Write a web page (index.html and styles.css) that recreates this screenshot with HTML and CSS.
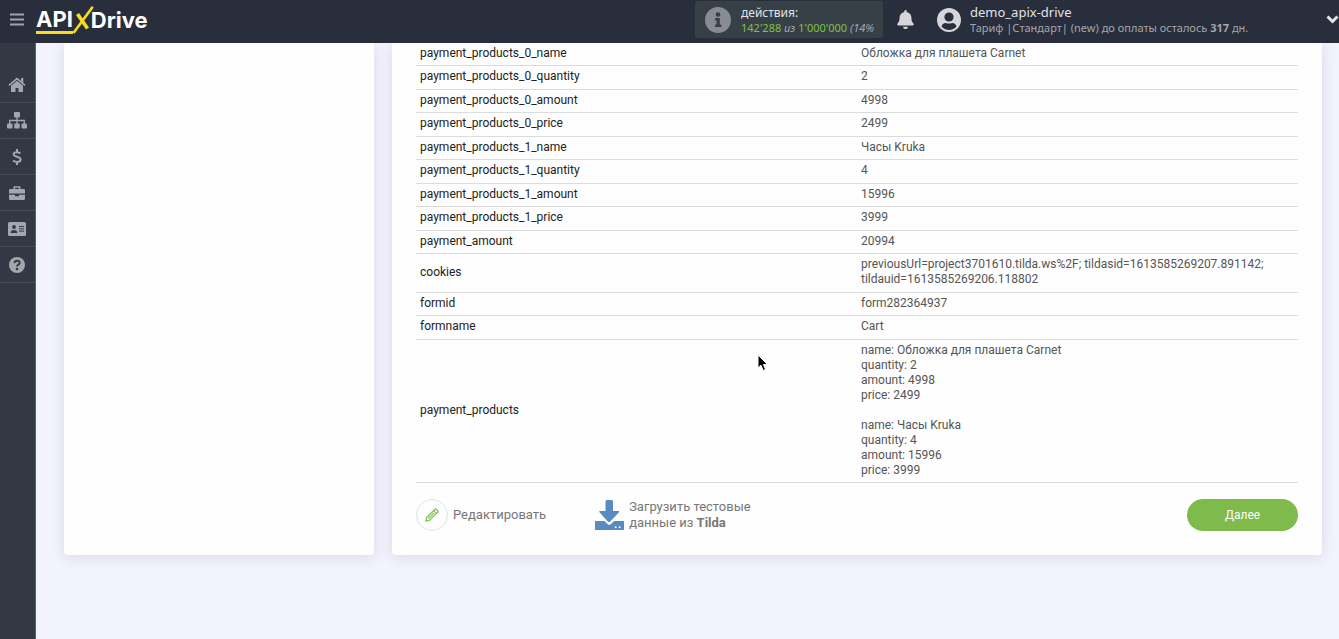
FILE: index.html
```html
<!DOCTYPE html>
<html lang="ru">
<head>
<meta charset="utf-8">
<title>ApiX-Drive</title>
<link rel="stylesheet" href="styles.css">
</head>
<body>
<header class="topbar">
  <button class="burger" type="button" aria-label="Меню">
    <svg width="14" height="13" viewBox="0 0 14 13"><path d="M0 1.5h14M0 6.5h14M0 11.5h14" stroke="#a0a3aa" stroke-width="2"/></svg>
  </button>
  <a class="logo" href="#">
    <span class="logo-api">API</span>
    <svg class="logo-x" width="21" height="28" viewBox="0 0 21 28" aria-hidden="true"><path d="M1.200 26L19 1.800" stroke="#fbdc1c" stroke-width="2.600" stroke-linecap="square" fill="none"/><path d="M4.500 8L14.500 22.500" stroke="#fbdc1c" stroke-width="3.600" fill="none"/></svg>
    <span class="logo-drive">Drive</span>
  </a>
  <div class="actions">
    <svg width="26" height="26" viewBox="0 0 26 26"><circle cx="13" cy="13" r="13" fill="#888c92"/><circle cx="13" cy="7.500" r="2.300" fill="#374047"/><path d="M10 11h4.800v6.500H16.300V20H10v-2.500h1.500v-4H10z" fill="#374047"/></svg>
    <div class="actions-text">
      <div class="actions-title">действия:</div>
      <div class="actions-count"><b>142'288</b> <i>из</i> <b>1'000'000</b> <i>(14%)</i></div>
    </div>
  </div>
  <button class="bell" type="button" aria-label="Уведомления">
    <svg width="17" height="19" viewBox="0 0 448 512"><path fill="#d6d6d8" d="M224 512c35 0 64-29 64-64H160c0 35 29 64 64 64zm215-150c-19-20-55-52-55-154 0-78-54-140-128-155V32a32 32 0 1 0-64 0v21C118 68 64 130 64 208c0 102-36 134-55 154-6 6-9 14-9 22 0 16 13 32 32 32h384c19 0 32-16 32-32 0-8-3-16-9-22z"/></svg>
  </button>
  <button class="user" type="button">
    <svg width="24" height="24" viewBox="0 0 24 24"><circle cx="12" cy="12" r="12" fill="#d6d6d8"/><circle cx="12" cy="9" r="4.600" fill="#292e3c"/><path d="M4.500 18.500c1-3 3.200-3.700 5-3.300 1.700.5 3.300.5 5 0 1.800-.4 4 .3 5 3.300a10 10 0 0 1-15 0z" fill="#292e3c"/></svg>
    <span class="user-text">
      <span class="user-name">demo_apix-drive</span>
      <span class="user-plan">Тариф |Стандарт| (new) до оплаты осталось <b>317</b> дн.</span>
    </span>
    <svg class="chevron" width="13" height="9" viewBox="0 0 13 9"><path d="M1.500 1.500l5 5 5-5" stroke="#e6e6e8" stroke-width="3" fill="none"/></svg>
  </button>
</header>
<div class="layout">
  <nav class="sidebar">
    <a href="#" aria-label="Главная"><svg width="18" height="16" viewBox="0 0 18 16"><path fill="#a3a6ac" d="M9 3.700l6 5V15h-4.500v-4h-3v4H3V8.700z"/><path d="M1 8.300L9 1.600l8 6.700" stroke="#a3a6ac" stroke-width="1.700" fill="none"/><path fill="#a3a6ac" d="M13 1h2.300v5L13 4z"/></svg></a>
    <a href="#" aria-label="Связи"><svg width="20" height="17" viewBox="0 0 20 17" fill="#a3a6ac"><rect x="7" width="6" height="5.500" rx="1"/><rect y="11.500" width="5.500" height="5" rx="1"/><rect x="7.200" y="11.500" width="5.500" height="5" rx="1"/><rect x="14.500" y="11.500" width="5.500" height="5" rx="1"/><path d="M10 5v7M2.700 12V8.500h14.600V12" stroke="#a3a6ac" stroke-width="1.300" fill="none"/></svg></a>
    <a href="#" aria-label="Оплата"><svg width="10" height="16" viewBox="0 0 10 16"><path d="M8.400 4.300C7 3.500 5.800 3.200 4.600 3.200 2.900 3.200 1.600 4 1.600 5.300c0 3.200 7 1.700 7 5.200 0 1.500-1.400 2.400-3.400 2.400-1.500 0-3-.5-4.100-1.400M5 0v3.500M5 12.500V16" stroke="#a3a6ac" stroke-width="2" fill="none"/></svg></a>
    <a href="#" aria-label="Проекты"><svg width="16" height="14" viewBox="0 0 16 14"><path d="M5.300 4V1h5.400v3" stroke="#a3a6ac" stroke-width="1.500" fill="none"/><path fill="#a3a6ac" d="M1.300 3h13.400Q16 3 16 4.300V7.600H0V4.300Q0 3 1.300 3zM0 8.700h6v1.500h4V8.700h6v4q0 1.300-1.300 1.300H1.300Q0 14 0 12.700z"/></svg></a>
    <a href="#" aria-label="Профиль"><svg width="18" height="14" viewBox="0 0 18 14"><rect width="18" height="14" rx="1.500" fill="#a3a6ac"/><circle cx="6" cy="5" r="1.900" fill="#323945"/><path d="M2.700 11q0-3 3.300-3t3.300 3z" fill="#323945"/><path d="M11 4.500h5M11 6.800h5M11 9.100h5" stroke="#323945" stroke-width="1"/></svg></a>
    <a href="#" aria-label="Помощь"><svg width="16" height="16" viewBox="0 0 16 16"><circle cx="8" cy="8" r="8" fill="#a3a6ac"/><path d="M5.300 6c.3-1.600 1.300-2.200 2.700-2.200 1.500 0 2.700.8 2.700 2.100C10.700 7.700 8 7.600 8 9.600" stroke="#323945" stroke-width="1.900" fill="none"/><circle cx="8" cy="12" r="1.300" fill="#323945"/></svg></a>
  </nav>
  <main class="content">
    <section class="card"></section>
    <section class="card data-card">
      <table class="data">
        <tbody>
          <tr><th scope="row">payment_products_0_name</th><td>Обложка для плашета Carnet</td></tr>
          <tr><th scope="row">payment_products_0_quantity</th><td>2</td></tr>
          <tr><th scope="row">payment_products_0_amount</th><td>4998</td></tr>
          <tr><th scope="row">payment_products_0_price</th><td>2499</td></tr>
          <tr><th scope="row">payment_products_1_name</th><td>Часы Kruka</td></tr>
          <tr><th scope="row">payment_products_1_quantity</th><td>4</td></tr>
          <tr><th scope="row">payment_products_1_amount</th><td>15996</td></tr>
          <tr><th scope="row">payment_products_1_price</th><td>3999</td></tr>
          <tr><th scope="row">payment_amount</th><td>20994</td></tr>
          <tr><th scope="row">cookies</th><td>previousUrl=project3701610.tilda.ws%2F; tildasid=1613585269207.891142; tildauid=1613585269206.118802</td></tr>
          <tr><th scope="row">formid</th><td>form282364937</td></tr>
          <tr><th scope="row">formname</th><td>Cart</td></tr>
          <tr><th scope="row">payment_products</th><td>name: Обложка для плашета Carnet<br>quantity: 2<br>amount: 4998<br>price: 2499<br><br>name: Часы Kruka<br>quantity: 4<br>amount: 15996<br>price: 3999</td></tr>
        </tbody>
      </table>
      <div class="card-footer">
        <button class="edit" type="button">
          <span class="edit-icon"><svg width="14" height="14" viewBox="0 0 14 14" fill="none" stroke="#86c25a" stroke-width="1.300" stroke-linejoin="round"><path d="M.8 13.200l.9-3.700 8.200-8.200q.7-.7 1.400 0l1.400 1.400q.7.700 0 1.400l-8.200 8.200zM8.700 2.600l2.700 2.700M3.400 10.600l5.700-5.700"/></svg></span>
          Редактировать
        </button>
        <button class="load" type="button">
          <svg width="29" height="30" viewBox="0 0 29 30"><path fill="#588cc0" d="M11.500 0h5q1.500 0 1.500 1.500V11h5.500q1.500 0 .5 1.300l-8.700 9.200q-1.300 1.200-2.600 0L4.500 12.300Q3.500 11 5 11h5.500V1.500Q10.500 0 11.500 0z"/><path fill="#588cc0" d="M0 21h9.500l3.300 3.200q1.500 1.300 3 0L19 21h10v9H0z"/><circle cx="20.700" cy="27.300" r="1" fill="#fff"/><circle cx="24.700" cy="27.300" r="1" fill="#fff"/></svg>
          <span>Загрузить тестовые<br>данные из <b>Tilda</b></span>
        </button>
        <button class="next" type="button">Далее</button>
      </div>
    </section>
  </main>
</div>
<svg class="cursor" width="12" height="18" viewBox="0 0 12 18" aria-hidden="true"><path d="M1 1v13l3-2.700L6.200 16.500l2.400-1L6.400 10.500H10.500z" fill="#000" stroke="#fff" stroke-width="1"/></svg>
</body>
</html>
```

FILE: styles.css
```css
* {
  box-sizing: border-box;
}

body {
  margin: 0;
  min-height: 100vh;
  display: flex;
  flex-direction: column;
  overflow-x: hidden;
  background: #f3f3fe;
  font-family: Roboto, sans-serif;
  font-size: 12px;
}

button {
  padding: 0;
  border: 0;
  background: none;
  font: inherit;
  color: inherit;
  text-align: left;
  cursor: pointer;
}

svg {
  display: block;
  flex: none;
}

.topbar {
  display: flex;
  align-items: center;
  height: 43px;
  padding: 0 0 4px 10px;
  background: #292e3c;
  color: #e2e2e4;
  font-family: "Noto Sans", sans-serif;
}

.logo {
  display: flex;
  align-items: center;
  margin-left: 12px;
  color: #fff;
  font-family: Inter, sans-serif;
  font-size: 22px;
  font-weight: 700;
  line-height: 24px;
  text-decoration: none;
}

.logo-api {
  margin-top: 2px;
  border-bottom: 3px solid #fbdc1c;
}

.logo-x {
  margin-right: -3px;
}

.actions {
  display: flex;
  align-items: center;
  gap: 10px;
  width: 188px;
  height: 37px;
  margin-left: auto;
  padding: 0 9px 0 10px;
  border-radius: 3px;
  background: #374047;
}

.actions-text {
  min-width: 0;
  overflow: hidden;
  white-space: nowrap;
  line-height: 15px;
}

.actions-title {
  font-size: 12px;
}

.actions-count {
  font-size: 11px;
  color: #a3a6ac;
}

.actions-count b {
  font-weight: 400;
  color: #7fc242;
}

.bell {
  margin-left: 14px;
}

.user {
  display: flex;
  align-items: center;
  gap: 9px;
  width: 402px;
  margin-left: 23px;
}

.user-text {
  flex: 1;
  white-space: nowrap;
  line-height: 15px;
}

.user-name,
.user-plan {
  display: block;
}

.user-name {
  font-size: 13px;
}

.user-plan {
  font-size: 11px;
  color: #a3a6ac;
}

.layout {
  flex: 1;
  display: flex;
}

.sidebar {
  flex: none;
  width: 36px;
  padding-top: 24px;
  border-right: 1px solid #59616c;
  background: #323945;
}

.sidebar a {
  display: flex;
  align-items: center;
  justify-content: center;
  height: 36px;
  padding-right: 2px;
  border-bottom: 1px solid #454c58;
}

.content {
  flex: 1;
  display: grid;
  grid-template-columns: 1fr 3fr;
  align-items: stretch;
  align-content: start;
  gap: 18px;
  padding: 0 17px 84px 28px;
}

.card {
  min-width: 0;
  border-radius: 0 0 4px 4px;
  background: #fefefe;
  box-shadow: 0 2px 14px rgba(60, 60, 100, 0.14);
}

.data-card {
  padding: 0 24px 24px;
}

.data {
  width: 100%;
  table-layout: fixed;
  border-collapse: separate;
  border-spacing: 0;
  line-height: 15px;
}

.data th,
.data td {
  padding: 3px 4px 4px;
  border-bottom: 1px solid #dcdcdc;
  font-weight: 400;
  text-align: left;
  vertical-align: middle;
}

.data tr:nth-child(even) > * {
  padding-bottom: 5px;
}

.data th {
  color: #222;
}

.data td {
  color: #555;
}

.card-footer {
  display: flex;
  align-items: center;
  margin-top: 16px;
  color: #777;
  font-size: 13px;
  line-height: 16px;
}

.edit,
.load {
  display: flex;
  align-items: center;
  gap: 5px;
}

.edit-icon {
  display: grid;
  place-items: center;
  width: 32px;
  height: 32px;
  border: 1px solid #dde3e8;
  border-radius: 50%;
}

.load {
  margin-left: 49px;
}

.next {
  width: 111px;
  height: 32px;
  margin-left: auto;
  border-radius: 16px;
  background: #7fba4c;
  color: #fff;
  font-size: 12px;
  text-align: center;
}

.cursor {
  position: absolute;
  left: 757px;
  top: 354px;
}
```
